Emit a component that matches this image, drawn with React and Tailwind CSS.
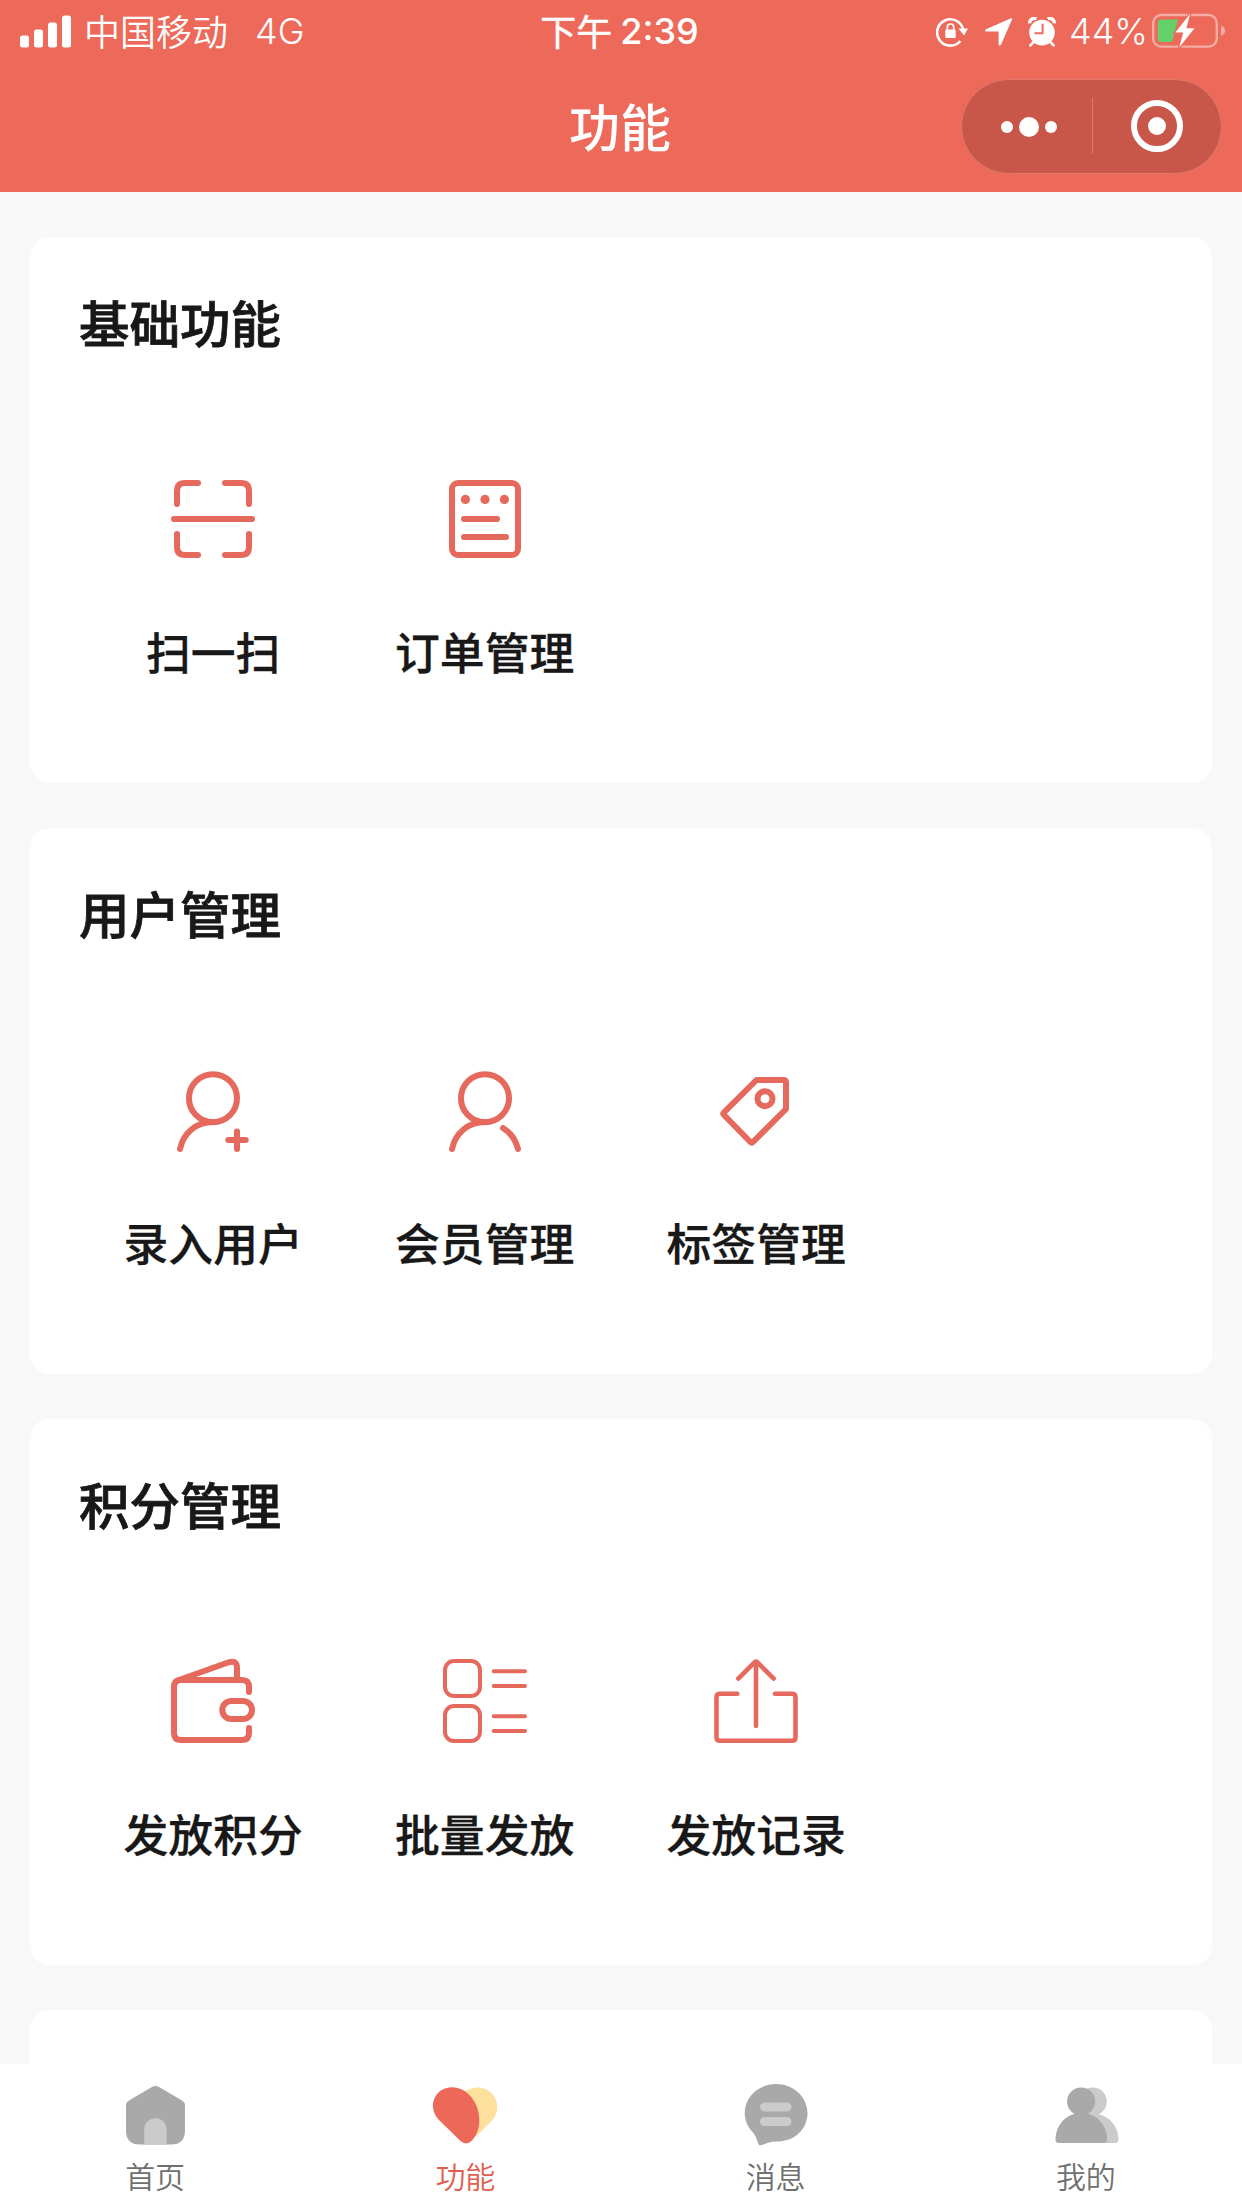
import React from 'react';

const SignalIcon = () => (
  <svg width="52" height="34" viewBox="0 0 52 34" fill="#fff">
    <rect x="0" y="20.5" width="9" height="12" rx="2.5" />
    <rect x="14" y="14.5" width="9" height="18" rx="2.5" />
    <rect x="28" y="7.5" width="9" height="25" rx="2.5" />
    <rect x="42" y="0.5" width="9" height="32" rx="2.5" />
  </svg>
);

const RotationLockIcon = () => (
  <svg width="32" height="32" viewBox="0 0 32 32" fill="none">
    <path d="M27.200 13.500A13.200 13.200 0 1 0 24.400 25" stroke="#fff" strokeWidth="2.6" />
    <path d="M22.5 12.6H32L28 19.5Z" fill="#fff" />
    <rect x="9.3" y="13.5" width="10.4" height="8.6" rx="1.4" fill="#fff" />
    <path d="M11.3 14V11.2a3.2 3.2 0 0 1 6.4 0V14" stroke="#fff" strokeWidth="1.7" />
  </svg>
);

const LocationIcon = () => (
  <svg width="28" height="28" viewBox="0 0 28 28" fill="#fff">
    <path d="M26 .3 1 11.2C-.4 12-.1 13.4 1.4 13.4H13.6V26C13.6 27.8 15.4 28 16.1 26.5L27 1.6C27.4.6 26.9 0 26 .3Z" />
  </svg>
);

const AlarmIcon = () => (
  <svg width="28" height="30" viewBox="0 0 28 30" fill="none">
    <circle cx="14" cy="15.6" r="12.8" fill="#fff" />
    <path d="M1.6 6.4A5 5 0 0 1 8.4 1.6M26.4 6.4A5 5 0 0 0 19.6 1.6" stroke="#fff" strokeWidth="3.4" />
    <path d="M5.5 25.2 2.4 28.4M22.5 25.2 25.6 28.4" stroke="#fff" strokeWidth="2.6" strokeLinecap="round" />
    <path d="M14.6 7.5V16.2H7.2" stroke="#ed6959" strokeWidth="2" strokeLinecap="round" />
  </svg>
);

const BatteryIcon = () => (
  <svg width="74" height="36" viewBox="0 0 74 36" fill="none">
    <rect x="1.2" y="2" width="63.6" height="31.6" rx="8" stroke="#fff" strokeOpacity=".45" strokeWidth="2.4" />
    <path d="M69 12.5C74.5 14.5 74.5 21 69 23Z" fill="#fff" fillOpacity=".45" />
    <path d="M9 6.5H26L20 29H9Q5.8 29 5.8 25.5V10Q5.8 6.5 9 6.5Z" fill="#65d16a" />
    <path d="M38.2.8 23.2 19.4h8L27.2 34.6 42.6 15.2h-8.2Z" fill="#fff" stroke="#ed6959" strokeWidth="2.6" paintOrder="stroke" />
  </svg>
);

const StatusBar = () => (
  <div className="grid h-[63px] grid-cols-3 items-center pr-4 pl-5 text-[36px] leading-none text-white">
    <div className="flex items-center">
      <SignalIcon />
      <span className="mb-[4px] ml-[12px] font-[350]">中国移动</span>
      <span className="mb-px ml-[27px] font-[Inter] font-light">4G</span>
    </div>
    <div className="flex items-center justify-center pr-[7px]">
      <span className="mb-[4px] [-webkit-text-stroke:0.5px_#fff]">下午</span>
      <span className="mb-px ml-2 font-[Inter] text-[36px] font-medium">2:39</span>
    </div>
    <div className="flex items-center justify-end">
      <RotationLockIcon />
      <span className="ml-[17px]"><LocationIcon /></span>
      <span className="ml-[15px]"><AlarmIcon /></span>
      <span className="mb-px ml-[13px] font-[Inter] font-light">44%</span>
      <span className="mb-px ml-[4px]"><BatteryIcon /></span>
    </div>
  </div>
);

const Capsule = () => (
  <div className="flex h-[95px] w-[261px] items-center rounded-full border border-[#dc7a6c] bg-[#c8574a]">
    <div className="flex h-full w-[130px] items-center justify-center gap-[6px] pt-px pl-[4px]">
      <i className="size-3 rounded-full bg-white" />
      <i className="size-5 rounded-full bg-white" />
      <i className="size-3 rounded-full bg-white" />
    </div>
    <div className="h-[56px] w-px bg-[#dc7a6c]" />
    <div className="flex h-full flex-1 items-center justify-center">
      <div className="flex size-[52px] items-center justify-center rounded-full border-6 border-white">
        <i className="size-[18px] rounded-full bg-white" />
      </div>
    </div>
  </div>
);

// Function icons, all on a 100x100 grid
const FnIcon = ({ width = 6, children }) => (
  <svg
    width="100"
    height="100"
    viewBox="0 0 100 100"
    fill="none"
    stroke="#e6695d"
    strokeWidth={width}
    strokeLinecap="round"
    strokeLinejoin="round"
  >
    {children}
  </svg>
);

const ScanIcon = () => (
  <FnIcon>
    <path d="M14 35V22Q14 14 22 14H35M62 14H78Q86 14 86 22V35M14 65V78Q14 86 22 86H35M62 86H78Q86 86 86 78V65M11 50H89" />
  </FnIcon>
);

const OrderIcon = () => (
  <FnIcon>
    <rect x="17" y="14" width="66" height="72" rx="6" />
    <path d="M29 50H62M29 68H71" />
    <g fill="#e6695d" stroke="none">
      <circle cx="30.4" cy="30.4" r="4.6" />
      <circle cx="50" cy="30.4" r="4.6" />
      <circle cx="69.4" cy="30.4" r="4.6" />
    </g>
  </FnIcon>
);

const AddUserIcon = () => (
  <FnIcon>
    <circle cx="50" cy="38.2" r="24" />
    <path d="M50 62C33 62 20.5 73 17 89M74 71.5V89M65.3 80H82.7" />
  </FnIcon>
);

const MemberIcon = () => (
  <FnIcon>
    <circle cx="50" cy="38.2" r="24" />
    <path d="M50 62C33 62 20.5 73 17 89M68 68C75.5 72.5 80.5 79.5 83 89" />
  </FnIcon>
);

const TagIcon = () => (
  <FnIcon>
    <path d="M50.5 20H77.5Q80 20 80 22.5V49L47 82Q45.7 83.3 44.4 82L18 55Q16.7 53.7 18 52.4Z" />
    <circle cx="59" cy="38.7" r="7.5" />
  </FnIcon>
);

const WalletIcon = () => (
  <FnIcon>
    <path d="M86 41V36Q86 29 79 29H18Q11 29 11 36V82Q11 89 18 89H79Q86 89 86 82V77" />
    <path d="M14.5 29.5 65 11.5Q74 8.5 74 17V28" />
    <rect x="59.3" y="50" width="29.7" height="18" rx="9" />
  </FnIcon>
);

const BatchIcon = () => (
  <FnIcon width={4}>
    <rect x="10" y="10" width="35" height="35" rx="9" />
    <rect x="10" y="55" width="35" height="35" rx="9" />
    <path d="M58.7 20.3H90M58.7 35H90M58.7 65.2H90M58.7 80H90" />
  </FnIcon>
);

const RecordIcon = () => (
  <FnIcon width={4.6}>
    <path d="M31.3 42.7H14Q10.5 42.7 10.5 46V86.5Q10.5 89.8 14 89.8H86Q89.5 89.8 89.5 86.5V46Q89.5 42.7 86 42.7H69" />
    <path d="M50 75V10.5M32.3 27.6 48.5 11.4Q50 10 51.5 11.4L67.7 27.6" />
  </FnIcon>
);

const TabIcon = ({ children }) => (
  <svg width="70" height="70" viewBox="0 0 70 70">{children}</svg>
);

const HomeIcon = () => (
  <TabIcon>
    <path d="M31.5 7.2Q35.5 4.8 39.5 7.2L62 20.5Q65 22.3 65 25.5V50.5Q65 64.5 51 64.5H20Q6 64.5 6 50.5V25.5Q6 22.3 9 20.5Z" fill="#a9a9a9" />
    <path d="M24.2 64.5V49.5A11.2 11.2 0 0 1 46.6 49.5V64.5Z" fill="#cbcbcb" />
  </TabIcon>
);

const HeartIcon = () => (
  <TabIcon>
    <path d="M34 12.5C49 1 67.2 11 67.2 27C67.2 34 64 38.5 60 42.5L46 56.5Z" fill="#fce09c" />
    <path d="M22 7.3C38 7.3 49.3 24 49.3 40C49.3 50 45.5 57.5 40.5 61.8Q35.5 65.5 30.5 61L8.5 39.5C-3.5 26.5 5 7.3 22 7.3Z" fill="#ec6858" />
  </TabIcon>
);

const MessageIcon = () => (
  <TabIcon>
    <path d="M35 4C52.5 4 66.5 17 66.5 33C66.5 49 54 61.6 35 61.6C30 61.6 25 63.5 20.5 65.1C18.5 65.7 17.6 65 17 63C15.5 58 14.5 55.5 11.5 52C6.5 46.5 3.7 40 3.7 33C3.7 17 17.5 4 35 4Z" fill="#a9a9a9" />
    <rect x="19" y="22.4" width="31.5" height="9" rx="4.5" fill="#cbcbcb" />
    <rect x="19" y="37" width="31.5" height="9" rx="4.5" fill="#cbcbcb" />
  </TabIcon>
);

const MineIcon = () => (
  <TabIcon>
    <g fill="#cbcbcb">
      <circle cx="41.8" cy="21.5" r="14" />
      <path d="M36 33.5C54 31 67.5 44 67.5 59.5Q67.5 63 64 63H36Z" />
    </g>
    <g fill="#a9a9a9">
      <circle cx="30.1" cy="21.5" r="14" />
      <path d="M30.3 33C45.5 33 56.1 45 56.1 59.5Q56.1 63 52.5 63H8Q4.5 63 4.5 59.5C4.5 45 15.5 33 30.3 33Z" />
    </g>
  </TabIcon>
);

const sections = [
  {
    title: '基础功能',
    items: [
      { label: '扫一扫', icon: ScanIcon },
      { label: '订单管理', icon: OrderIcon },
    ],
  },
  {
    title: '用户管理',
    items: [
      { label: '录入用户', icon: AddUserIcon },
      { label: '会员管理', icon: MemberIcon },
      { label: '标签管理', icon: TagIcon },
    ],
  },
  {
    title: '积分管理',
    items: [
      { label: '发放积分', icon: WalletIcon },
      { label: '批量发放', icon: BatchIcon },
      { label: '发放记录', icon: RecordIcon },
    ],
  },
  { title: '', items: [] },
];

const tabs = [
  { label: '首页', icon: HomeIcon },
  { label: '功能', icon: HeartIcon, active: true },
  { label: '消息', icon: MessageIcon },
  { label: '我的', icon: MineIcon },
];

const Section = ({ title, items }) => (
  <section className="h-[546px] shrink-0 rounded-[20px] bg-white pt-[49px] pr-[48.6px] pl-[47.4px]">
    <h2 className="h-[70px] pl-[1.6px] text-[50.5px] leading-[70px] font-medium [-webkit-text-stroke:0.8px_#181818]">{title}</h2>
    <div className="mt-[113px] grid grid-cols-4">
      {items.map(({ label, icon: Icon }) => (
        <div key={label} className="flex flex-col items-center">
          <Icon />
          <span className="mt-[50px] text-[44.8px] leading-[64px] font-medium whitespace-nowrap [-webkit-text-stroke:0.3px_#181818]">{label}</span>
        </div>
      ))}
    </div>
  </section>
);

const App = () => (
  <div className="flex h-[2208px] w-[1242px] flex-col overflow-hidden bg-[#f8f8f8] font-['Noto_Sans_CJK_SC',sans-serif] text-[#181818]">
    <header className="h-[192px] shrink-0 bg-[#ed6959]">
      <StatusBar />
      <div className="grid h-[126px] grid-cols-3 items-center">
        <h1 className="col-start-2 pr-[2px] pb-px text-center text-[51px] leading-none font-medium text-white">功能</h1>
        <div className="mr-5 justify-self-end"><Capsule /></div>
      </div>
    </header>

    <main className="flex min-h-0 flex-1 flex-col gap-[45px] overflow-hidden px-[30px] pt-[45px]">
      {sections.map((section, idx) => (
        <Section key={idx} {...section} />
      ))}
    </main>

    <nav className="grid h-[144px] shrink-0 grid-cols-4 bg-white pt-4 pr-px">
      {tabs.map(({ label, icon: Icon, active }) => (
        <div key={label} className={`flex flex-col items-center ${active ? 'text-[#e0604f]' : 'text-[#707070]'}`}>
          <Icon />
          <span className="mt-[5px] text-[30px] leading-[40px] font-[350]">{label}</span>
        </div>
      ))}
    </nav>
  </div>
);

export default App;
